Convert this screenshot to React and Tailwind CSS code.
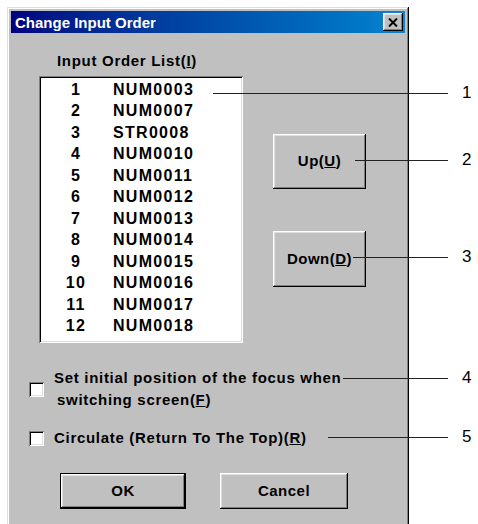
const items = [
  "NUM0003",
  "NUM0007",
  "STR0008",
  "NUM0010",
  "NUM0011",
  "NUM0012",
  "NUM0013",
  "NUM0014",
  "NUM0015",
  "NUM0016",
  "NUM0017",
  "NUM0018",
];

const raised =
  "shadow-[inset_-1px_-1px_0_#000,inset_1px_1px_0_#fff,inset_-2px_-2px_0_#808080,inset_2px_2px_0_#dfdfdf]";
const sunken =
  "shadow-[inset_1px_1px_0_#808080,inset_-1px_-1px_0_#fff,inset_2px_2px_0_#000,inset_-2px_-2px_0_#dfdfdf]";

const Callout = ({ line, num, label }) => (
  <>
    <div className={`absolute h-px bg-[#222] ${line}`} />
    <div
      className={`absolute left-[462px] h-[20px] text-[17px] leading-[20px] text-black ${num}`}
    >
      {label}
    </div>
  </>
);

const App = () => {
  return (
    <div className="relative h-[524px] w-[478px] overflow-hidden bg-white font-['Liberation_Sans',Arial,sans-serif] text-black">
      <div
        className={`ml-[7px] mt-[7px] h-[560px] w-[402px] bg-[#c0c0c0] p-[4px] shadow-[inset_-1px_-1px_0_#000,inset_1px_1px_0_#dfdfdf,inset_-2px_-2px_0_#808080,inset_2px_2px_0_#fff]`}
      >
        {/* title bar */}
        <div className="flex h-[22px] items-center justify-between bg-linear-to-r from-[#000080] to-[#1084d0] pl-[4px] pr-[2px]">
          <span className="text-[15px] font-bold leading-none text-white">
            Change Input Order
          </span>
          <div
            className={`flex h-[18px] w-[20px] items-center justify-center bg-[#c0c0c0] ${raised}`}
          >
            <svg width="10" height="9" viewBox="0 0 10 9">
              <path
                d="M1 0.5 L9 8.5 M9 0.5 L1 8.5"
                stroke="#000"
                strokeWidth="2"
              />
            </svg>
          </div>
        </div>

        {/* body */}
        <div className="pt-[18px]">
          <div className="flex">
            <div className="ml-[28px] w-[204px]">
              <div className="h-[20px] pl-[18px] text-[15px] font-bold leading-[20px] tracking-[0.7px]">
                Input Order List(<span className="underline">I</span>)
              </div>
              <div className={`mt-[5px] h-[267px] bg-white pt-[3px] ${sunken}`}>
                {items.map((name, i) => (
                  <div
                    key={name}
                    className="flex h-[21.5px] items-center text-[16px] font-bold tracking-[1.3px]"
                  >
                    <span className="w-[74px] text-center">{i + 1}</span>
                    <span>{name}</span>
                  </div>
                ))}
              </div>
            </div>
            <div className="ml-[30px] flex flex-col pt-[83px]">
              <button
                className={`h-[55px] w-[93px] bg-[#c0c0c0] text-[15px] font-bold tracking-[0.5px] ${raised}`}
              >
                Up(<span className="underline">U</span>)
              </button>
              <button
                className={`mt-[42px] h-[56px] w-[93px] bg-[#c0c0c0] text-[15px] font-bold tracking-[0.5px] ${raised}`}
              >
                Down(<span className="underline">D</span>)
              </button>
            </div>
          </div>

          {/* checkboxes */}
          <div className="ml-[18px] mt-[24px] flex items-center">
            <div className={`h-[15px] w-[15px] shrink-0 bg-white ${sunken}`} />
            <div className="ml-[10px] text-[15px] font-bold leading-[22px] tracking-[0.7px]">
              <div>Set initial position of the focus when</div>
              <div className="pl-[3px]">
                switching screen(<span className="underline">F</span>)
              </div>
            </div>
          </div>
          <div className="ml-[18px] mt-[16px] flex h-[22px] items-center">
            <div className={`h-[15px] w-[15px] shrink-0 bg-white ${sunken}`} />
            <div className="ml-[10px] text-[15px] font-bold leading-[22px] tracking-[0.7px]">
              Circulate (Return To The Top)(<span className="underline">R</span>)
            </div>
          </div>

          {/* buttons */}
          <div className="ml-[49px] mt-[24px] flex">
            <button
              className={`h-[36px] w-[126px] border border-black bg-[#c0c0c0] text-[15px] font-bold tracking-[0.5px] ${raised}`}
            >
              OK
            </button>
            <button
              className={`ml-[34px] h-[36px] w-[128px] bg-[#c0c0c0] text-[15px] font-bold tracking-[0.5px] ${raised}`}
            >
              Cancel
            </button>
          </div>
        </div>
      </div>

      {/* callouts */}
      <Callout line="left-[213px] top-[93px] w-[235px]" num="top-[83px]" label="1" />
      <Callout line="left-[355px] top-[160px] w-[93px]" num="top-[150px]" label="2" />
      <Callout line="left-[353px] top-[257px] w-[95px]" num="top-[247px]" label="3" />
      <Callout line="left-[343px] top-[378px] w-[105px]" num="top-[368px]" label="4" />
      <Callout line="left-[328px] top-[437px] w-[120px]" num="top-[427px]" label="5" />
    </div>
  );
};

export default App;
